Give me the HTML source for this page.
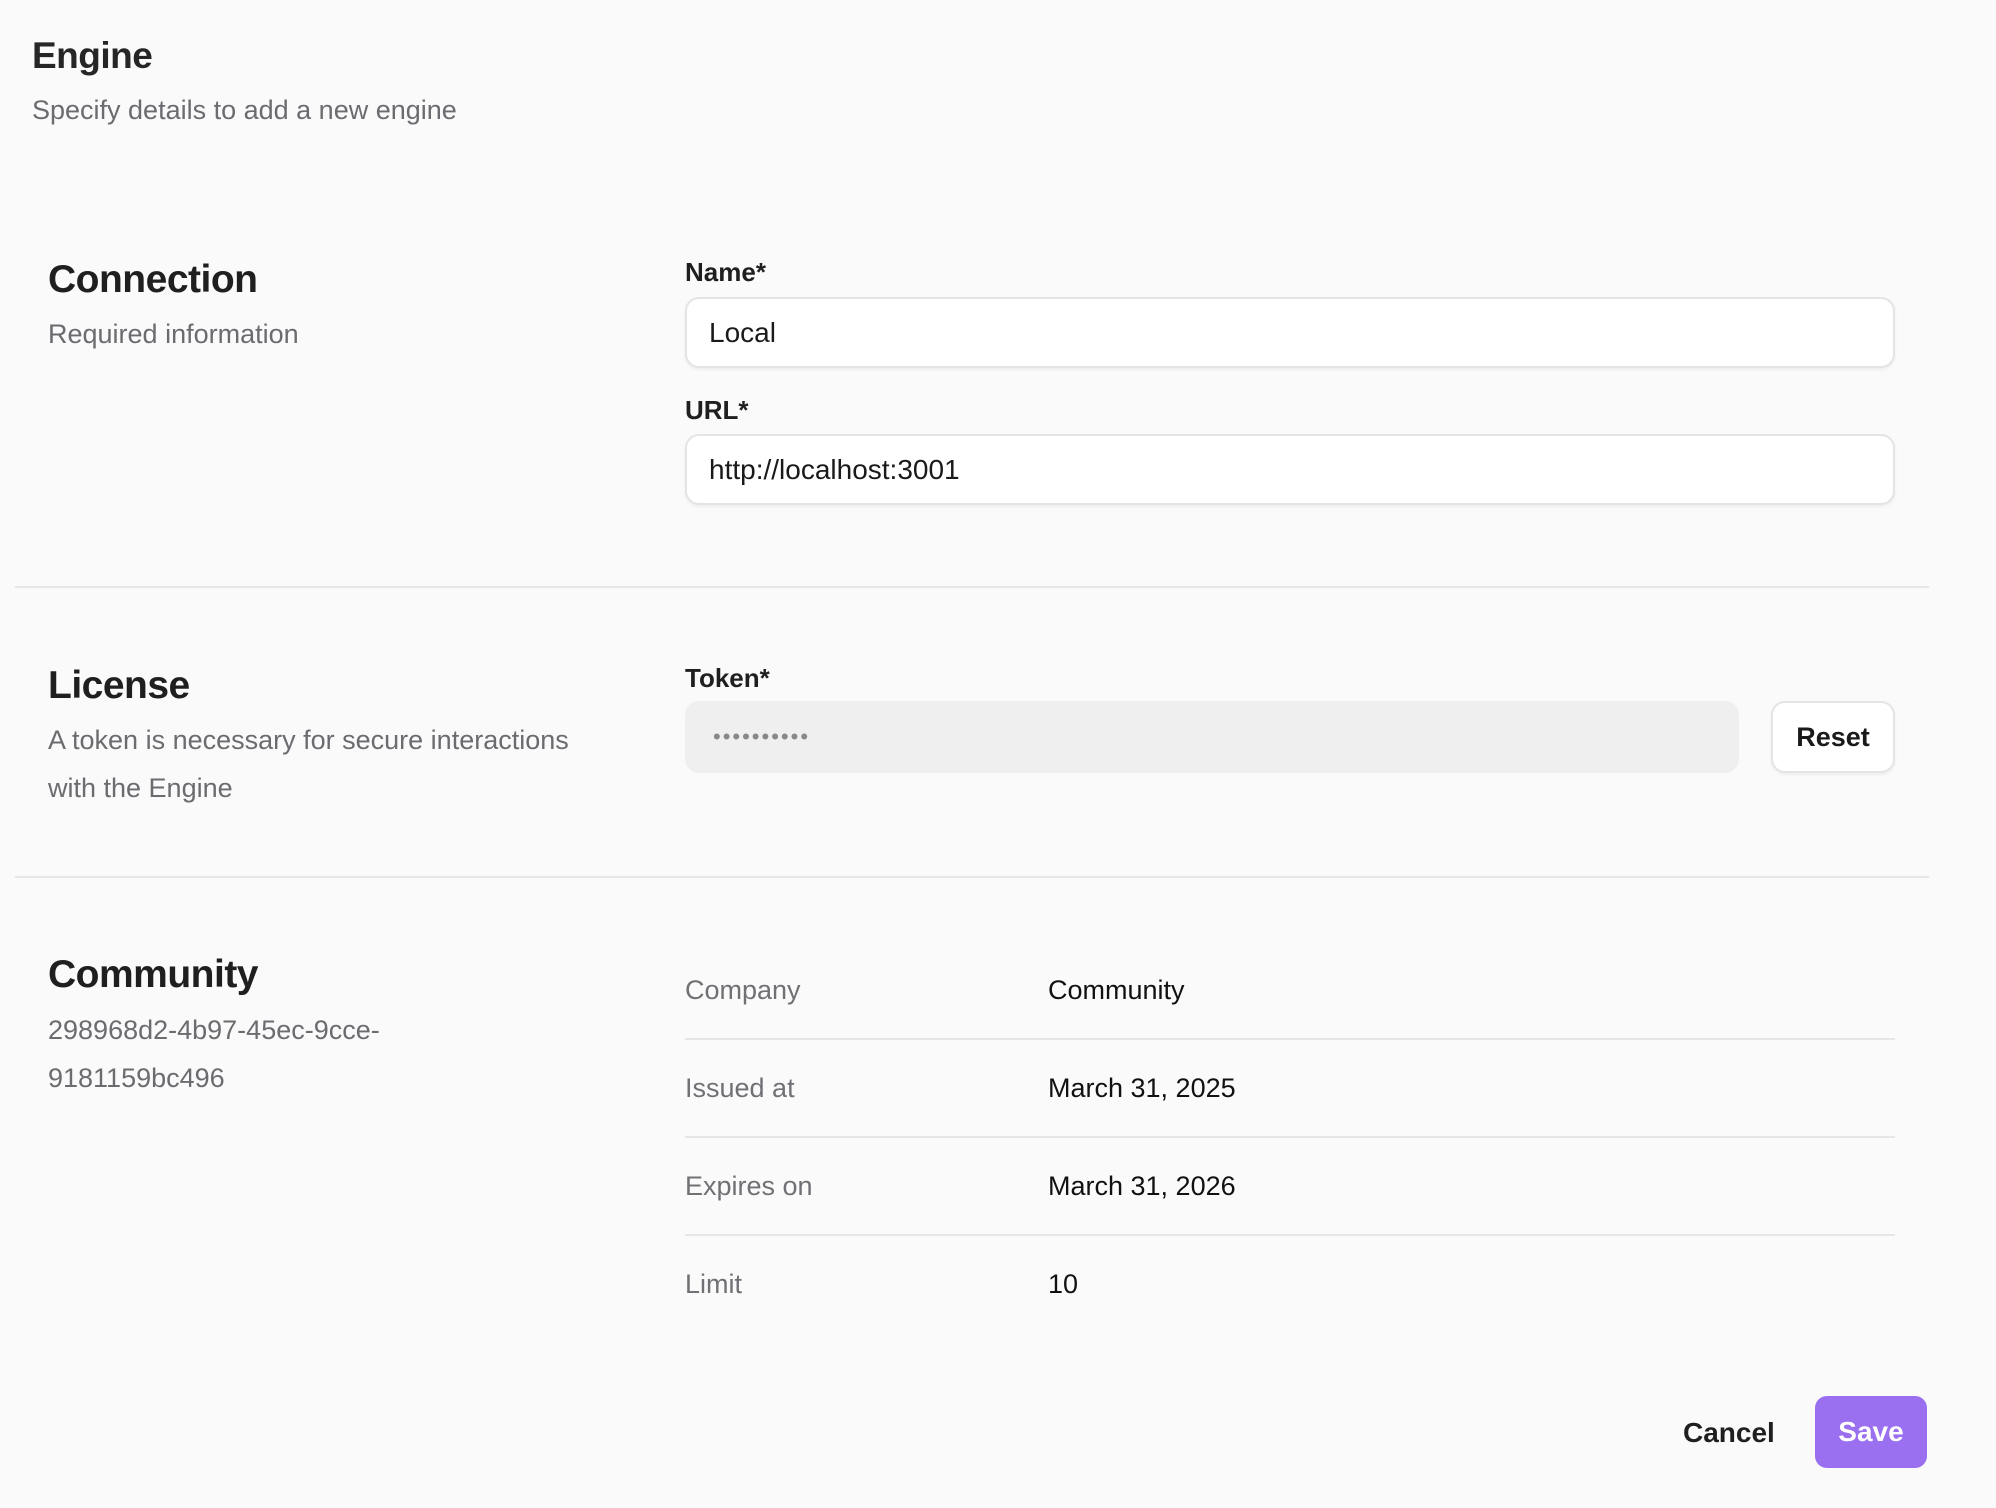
<!DOCTYPE html>
<html><head><meta charset="utf-8"><style>
*{box-sizing:border-box;margin:0;padding:0}
body{width:1996px;height:1508px;background:#fafafa;font-family:"Liberation Sans",Arial,sans-serif;color:#1f1f1f;position:relative;overflow:hidden}
.a{position:absolute;white-space:nowrap;line-height:1}
.h1{font-size:37px;font-weight:700;color:#262626;letter-spacing:-0.5px}
.h2{font-size:39px;font-weight:700;color:#1f1f1f;letter-spacing:-0.5px}
.sub{font-size:27px;color:#6b6b70}
.lbl{font-size:26px;font-weight:700;color:#1f1f1f}
.inp{position:absolute;background:#fff;border:2px solid #e4e4e6;border-radius:14px;box-shadow:0 2px 3px rgba(0,0,0,0.05);font-size:28px;padding-left:22px;display:flex;align-items:center;color:#1a1a1a}
.hr{position:absolute;height:2px;background:#e6e6e6}
.k{font-size:27px;color:#707075}
.v{font-size:27px;color:#111}
</style></head><body>
<div class="a h1" style="left:32px;top:37px">Engine</div>
<div class="a sub" style="left:32px;top:97px">Specify details to add a new engine</div>

<div class="a h2" style="left:48px;top:260px">Connection</div>
<div class="a sub" style="left:48px;top:321px">Required information</div>
<div class="a lbl" style="left:685px;top:259px">Name*</div>
<div class="inp" style="left:685px;top:297px;width:1210px;height:71px">Local</div>
<div class="a lbl" style="left:685px;top:397px">URL*</div>
<div class="inp" style="left:685px;top:434px;width:1210px;height:71px">http://localhost:3001</div>
<div class="hr" style="left:15px;top:586px;width:1914px"></div>

<div class="a h2" style="left:48px;top:666px">License</div>
<div class="a sub" style="left:48px;top:727px">A token is necessary for secure interactions</div>
<div class="a sub" style="left:48px;top:775px">with the Engine</div>
<div class="a lbl" style="left:685px;top:665px">Token*</div>
<div class="inp" style="left:685px;top:701px;width:1054px;height:72px;background:#efefef;border-color:#efefef;box-shadow:none;color:#888;font-size:22px;letter-spacing:2px;padding-left:26px">••••••••••</div>
<div class="inp" style="left:1771px;top:701px;width:124px;height:72px;justify-content:center;padding:0;font-weight:700;font-size:27px">Reset</div>
<div class="hr" style="left:15px;top:876px;width:1914px"></div>

<div class="a h2" style="left:48px;top:955px">Community</div>
<div class="a sub" style="left:48px;top:1017px">298968d2-4b97-45ec-9cce-</div>
<div class="a sub" style="left:48px;top:1065px">9181159bc496</div>

<div class="a k" style="left:685px;top:977px">Company</div><div class="a v" style="left:1048px;top:977px">Community</div>
<div class="hr" style="left:685px;top:1038px;width:1210px"></div>
<div class="a k" style="left:685px;top:1075px">Issued at</div><div class="a v" style="left:1048px;top:1075px">March 31, 2025</div>
<div class="hr" style="left:685px;top:1136px;width:1210px"></div>
<div class="a k" style="left:685px;top:1173px">Expires on</div><div class="a v" style="left:1048px;top:1173px">March 31, 2026</div>
<div class="hr" style="left:685px;top:1234px;width:1210px"></div>
<div class="a k" style="left:685px;top:1271px">Limit</div><div class="a v" style="left:1048px;top:1271px">10</div>

<div class="a" style="left:1683px;top:1419px;font-size:28px;font-weight:700;color:#1f1f1f">Cancel</div>
<div style="position:absolute;left:1815px;top:1396px;width:112px;height:72px;background:#9a6ff0;border-radius:12px;color:#fff;font-size:28px;font-weight:700;display:flex;align-items:center;justify-content:center">Save</div>
</body></html>
